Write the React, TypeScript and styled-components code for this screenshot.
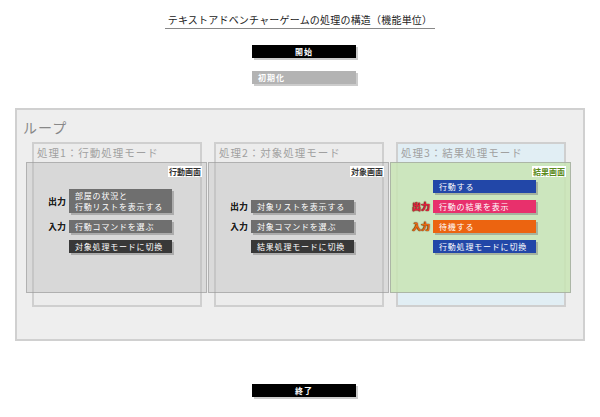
import * as React from 'react'
import styled, { createGlobalStyle } from 'styled-components'

const Global = createGlobalStyle`
  body {
    margin: 0;
    background: #fff;
    font-family: "Noto Sans CJK JP", "Liberation Sans", sans-serif;
  }
`

type Tone = 'gray' | 'dark' | 'blue' | 'pink' | 'orange'

const tones: Record<Tone, string> = {
  gray: '#6f6f6f',
  dark: '#383838',
  blue: '#2247a8',
  pink: '#e8306c',
  orange: '#ec6410'
}

interface Row {
  label?: string
  labelColor?: string
  text: string
  tone: Tone
}

interface Proc {
  title: string
  screen: string
  screenColor: string
  boxBg: string
  panelBg: string
  rows: Row[]
}

const procs: Proc[] = [
  {
    title: '処理1：行動処理モード',
    screen: '行動画面',
    screenColor: '#333',
    boxBg: '#ececec',
    panelBg: 'rgba(180,180,180,0.35)',
    rows: [
      { label: '出力', text: '部屋の状況と\n行動リストを表示する', tone: 'gray' },
      { label: '入力', text: '行動コマンドを選ぶ', tone: 'gray' },
      { text: '対象処理モードに切換', tone: 'dark' }
    ]
  },
  {
    title: '処理2：対象処理モード',
    screen: '対象画面',
    screenColor: '#333',
    boxBg: '#ececec',
    panelBg: 'rgba(180,180,180,0.35)',
    rows: [
      { label: '出力', text: '対象リストを表示する', tone: 'gray' },
      { label: '入力', text: '対象コマンドを選ぶ', tone: 'gray' },
      { text: '結果処理モードに切換', tone: 'dark' }
    ]
  },
  {
    title: '処理3：結果処理モード',
    screen: '結果画面',
    screenColor: '#5a8a1a',
    boxBg: '#e1eef4',
    panelBg: 'rgba(200,228,180,0.85)',
    rows: [
      { text: '行動する', tone: 'blue' },
      { label: '出力', labelColor: '#e02040', text: '行動の結果を表示', tone: 'pink' },
      { label: '入力', labelColor: '#e86a10', text: '待機する', tone: 'orange' },
      { text: '行動処理モードに切換', tone: 'blue' }
    ]
  }
]

const App: React.FunctionComponent = () => (
  <Page>
    <Global />
    <Title>テキストアドベンチャーゲームの処理の構造（機能単位）</Title>
    <Step $bg='#000' $center>開始</Step>
    <Step $bg='#b3b3b3'>初期化</Step>
    <Loop>
      <LoopTitle>ループ</LoopTitle>
      <Procs>
        {procs.map(p => (
          <ProcBox key={p.title} $bg={p.boxBg}>
            <ProcTitle>{p.title}</ProcTitle>
            <Panel $bg={p.panelBg}>
              <ScreenLabel $color={p.screenColor}>{p.screen}</ScreenLabel>
              <Rows>
                {p.rows.map(r => (
                  <RowLine key={r.text}>
                    <IoLabel $color={r.labelColor}>{r.label}</IoLabel>
                    <Btn $tone={r.tone}>{r.text}</Btn>
                  </RowLine>
                ))}
              </Rows>
            </Panel>
          </ProcBox>
        ))}
      </Procs>
    </Loop>
    <Step $bg='#000' $center $end>終了</Step>
  </Page>
)

export { App as default }

const Page = styled.div`
  width: 600px;
  height: 417px;
  padding-top: 13px;
  box-sizing: border-box;
  display: flex;
  flex-direction: column;
  align-items: center;
`

const Title = styled.div`
  font-size: 10px;
  line-height: 14px;
  color: #222;
  padding: 0 3px 1px;
  border-bottom: 1px solid #888;
  margin-bottom: 16px;
  letter-spacing: 0.2px;
`

const Step = styled.div<{ $bg: string; $center?: boolean; $end?: boolean }>`
  width: 104px;
  height: 13px;
  margin-left: 8px;
  background: ${p => p.$bg};
  color: #fff;
  font-size: 8px;
  font-weight: bold;
  line-height: 13px;
  text-align: ${p => (p.$center ? 'center' : 'left')};
  padding-left: ${p => (p.$center ? 0 : 6)}px;
  letter-spacing: 1px;
  box-sizing: border-box;
  box-shadow: 2px 2px 0 #ccc;
  margin-bottom: 13px;
  margin-top: ${p => (p.$end ? 43 : 0)}px;
`

const Loop = styled.div`
  width: 570px;
  height: 233px;
  box-sizing: border-box;
  margin-top: 11px;
  background: #eeeeee;
  border: 2px solid #d0d0d0;
  padding: 7px 0 0 15px;
`

const LoopTitle = styled.div`
  font-size: 14px;
  color: #888;
  line-height: 20px;
  margin-left: -9px;
  letter-spacing: 1px;
`

const Procs = styled.div`
  display: flex;
  gap: 12px;
  margin-top: 5px;
`

const ProcBox = styled.div<{ $bg: string }>`
  width: 170px;
  height: 165px;
  box-sizing: border-box;
  background: ${p => p.$bg};
  border: 2px solid #cfcfcf;
`

const ProcTitle = styled.div`
  font-size: 10.5px;
  color: #a0a0a0;
  line-height: 18px;
  padding-left: 3px;
  letter-spacing: 1px;
`

const Panel = styled.div<{ $bg: string }>`
  margin: 0 -7px 0 -8px;
  height: 131px;
  box-sizing: border-box;
  background: ${p => p.$bg};
  border: 1.5px solid rgba(150,150,150,0.6);
  padding: 3px 4px 0 0;
  display: flex;
  flex-direction: column;
`

const ScreenLabel = styled.div<{ $color: string }>`
  align-self: flex-end;
  font-size: 8px;
  font-weight: bold;
  line-height: 11px;
  padding: 0 1px;
  background: #fff;
  color: ${p => p.$color};
`

const Rows = styled.div`
  height: 76px;
  display: flex;
  flex-direction: column;
  justify-content: flex-end;
  gap: 7px;
`

const RowLine = styled.div`
  display: flex;
  align-items: center;
  gap: 3px;
`

const IoLabel = styled.div<{ $color?: string }>`
  width: 39px;
  text-align: right;
  font-size: 9px;
  font-weight: 900;
  color: ${p => p.$color || '#222'};
  text-shadow: ${p =>
    p.$color
      ? '0 0 1px #5a1a00, 0 0 1px #5a1a00'
      : '0 0 1px #fff, 0 0 1px #fff'};
`

const Btn = styled.div<{ $tone: Tone }>`
  width: 103px;
  min-height: 13px;
  box-sizing: border-box;
  padding: 1px 6px;
  background: ${p => tones[p.$tone]};
  color: #fff;
  font-size: 8px;
  line-height: 11px;
  white-space: pre-line;
  box-shadow: 2px 2px 0 rgba(120,120,120,0.45);
  letter-spacing: 0.8px;
`
